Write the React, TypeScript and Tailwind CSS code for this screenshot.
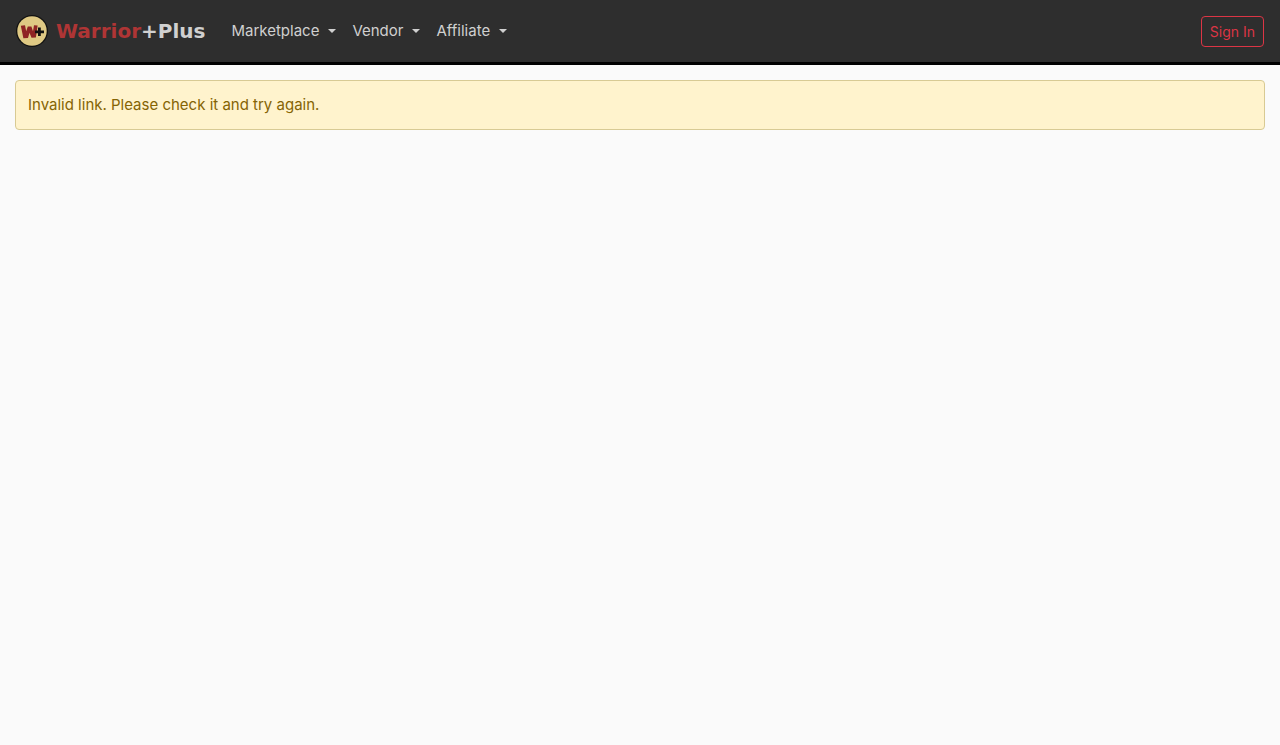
const menus = ["Marketplace", "Vendor", "Affiliate"];

function Logo() {
  return (
    <svg className="h-8 w-8" viewBox="0 0 32 32" aria-hidden="true">
      <circle cx="16" cy="16" r="16" fill="#111" />
      <circle cx="16" cy="16" r="14.7" fill="#dfc984" />
      <path
        d="M4.8 10.8 9 10.2l1.2 6 1.6-4.8h3.6l1.6 4.8 1-6 3.6.4-.3 2.4-1.4 9.6-4.4.2-2-5-1.5 5.2-4.6.2z"
        fill="#8f2424"
      />
      <path d="M22 12.6h2.8v2.8h3.2v2.8h-3.2v2.9H22v-2.9h-3v-2.8h3z" fill="#111" />
    </svg>
  );
}

function Navbar() {
  return (
    <header className="flex items-center border-b-[3px] border-black bg-[#2e2e2e] px-4 py-[11px]">
      <a href="#" className="mr-[18px] flex h-10 items-center gap-2 font-['DejaVu_Sans'] text-xl font-bold">
        <Logo />
        <span className="text-[#d0d0d0]">
          <span className="text-[#af3535]">Warrior</span>+Plus
        </span>
      </a>
      <nav className="flex">
        {menus.map((menu) => (
          <button key={menu} type="button" className="flex items-center gap-[9px] px-2 py-2 text-[#d0d0d0]">
            {menu}
            <span className="border-x-4 border-t-4 border-x-transparent border-t-[#d0d0d0]" aria-hidden="true" />
          </button>
        ))}
      </nav>
      <a href="#" className="ml-auto rounded border border-[#dc3545] px-2 py-1 text-sm leading-[21px] text-[#dc3545]">
        Sign In
      </a>
    </header>
  );
}

export default function App() {
  return (
    <div className="min-h-screen bg-[#fafafa] font-['Inter',sans-serif] text-[15px] leading-6">
      <Navbar />
      <main className="p-[15px]">
        <div role="alert" className="rounded border border-[#d8ca94] bg-[#fff3cd] p-3 text-[#856404]">
          Invalid link. Please check it and try again.
        </div>
      </main>
    </div>
  );
}
